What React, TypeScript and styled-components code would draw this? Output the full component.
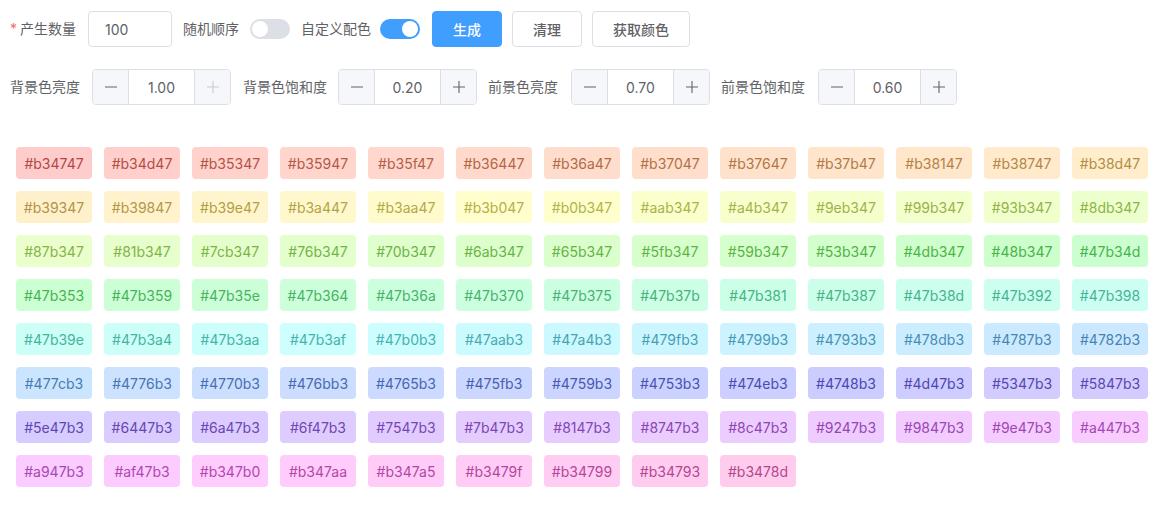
import React from "react";
import styled, { createGlobalStyle } from "styled-components";

const GlobalStyle = createGlobalStyle`
  html, body { margin: 0; padding: 0; background: #ffffff; }
  body { font-family: Inter, "Noto Sans CJK SC", sans-serif; font-size: 14px; color: #606266; }
  * { box-sizing: border-box; }
`;

const COLORS = [
  "b34747","b34d47","b35347","b35947","b35f47","b36447","b36a47","b37047","b37647","b37b47","b38147","b38747","b38d47",
  "b39347","b39847","b39e47","b3a447","b3aa47","b3b047","b0b347","aab347","a4b347","9eb347","99b347","93b347","8db347",
  "87b347","81b347","7cb347","76b347","70b347","6ab347","65b347","5fb347","59b347","53b347","4db347","48b347","47b34d",
  "47b353","47b359","47b35e","47b364","47b36a","47b370","47b375","47b37b","47b381","47b387","47b38d","47b392","47b398",
  "47b39e","47b3a4","47b3aa","47b3af","47b0b3","47aab3","47a4b3","479fb3","4799b3","4793b3","478db3","4787b3","4782b3",
  "477cb3","4776b3","4770b3","476bb3","4765b3","475fb3","4759b3","4753b3","474eb3","4748b3","4d47b3","5347b3","5847b3",
  "5e47b3","6447b3","6a47b3","6f47b3","7547b3","7b47b3","8147b3","8747b3","8c47b3","9247b3","9847b3","9e47b3","a447b3",
  "a947b3","af47b3","b347b0","b347aa","b347a5","b3479f","b34799","b34793","b3478d",
];

function hueOf(hex: string): number {
  const r = parseInt(hex.slice(0, 2), 16) / 255;
  const g = parseInt(hex.slice(2, 4), 16) / 255;
  const b = parseInt(hex.slice(4, 6), 16) / 255;
  const max = Math.max(r, g, b);
  const min = Math.min(r, g, b);
  const d = max - min;
  if (d === 0) return 0;
  let h = 0;
  if (max === r) h = ((g - b) / d) % 6;
  else if (max === g) h = (b - r) / d + 2;
  else h = (r - g) / d + 4;
  h *= 60;
  if (h < 0) h += 360;
  return h;
}

function hsv(h: number, s: number, v: number): string {
  const c = v * s;
  const x = c * (1 - Math.abs(((h / 60) % 2) - 1));
  const m = v - c;
  let r = 0, g = 0, b = 0;
  if (h < 60) [r, g, b] = [c, x, 0];
  else if (h < 120) [r, g, b] = [x, c, 0];
  else if (h < 180) [r, g, b] = [0, c, x];
  else if (h < 240) [r, g, b] = [0, x, c];
  else if (h < 300) [r, g, b] = [x, 0, c];
  else [r, g, b] = [c, 0, x];
  const to = (n: number) => Math.round((n + m) * 255).toString(16).padStart(2, "0");
  return `#${to(r)}${to(g)}${to(b)}`;
}

const Page = styled.div`
  padding: 11px 0 0 10px;
`;

const Row = styled.div<{ $mb: number }>`
  display: flex;
  align-items: center;
  height: 36px;
  margin-bottom: ${(p) => p.$mb}px;
`;

const Label = styled.span<{ $mr: number }>`
  font-size: 14px;
  line-height: 20px;
  color: #606266;
  white-space: nowrap;
  margin-right: ${(p) => p.$mr}px;
`;

const Star = styled.span`
  color: #f56c6c;
  margin-right: 3px;
`;

const TextInput = styled.div`
  width: 84px;
  height: 36px;
  border: 1px solid #dcdfe6;
  border-radius: 4px;
  display: flex;
  align-items: center;
  padding-left: 16px;
  color: #606266;
  font-size: 14px;
  margin-right: 11px;
`;

const Switch = styled.div<{ $on: boolean; $mr: number }>`
  position: relative;
  width: 40px;
  height: 20px;
  border-radius: 10px;
  background: ${(p) => (p.$on ? "#409eff" : "#dcdfe6")};
  margin-right: ${(p) => p.$mr}px;
  flex-shrink: 0;
`;

const Knob = styled.span<{ $on: boolean }>`
  position: absolute;
  top: 2px;
  left: ${(p) => (p.$on ? "22px" : "2px")};
  width: 16px;
  height: 16px;
  border-radius: 50%;
  background: #ffffff;
`;

const Button = styled.button<{ $primary?: boolean }>`
  height: 36px;
  padding: 0 20px;
  border-radius: 4px;
  border: 1px solid ${(p) => (p.$primary ? "#409eff" : "#dcdfe6")};
  background: ${(p) => (p.$primary ? "#409eff" : "#ffffff")};
  color: ${(p) => (p.$primary ? "#ffffff" : "#606266")};
  font-family: Inter, "Noto Sans CJK SC", sans-serif;
  font-size: 14px;
  font-weight: 500;
  margin-right: 10px;
  cursor: pointer;
`;

const NumberBox = styled.div<{ $mr: number }>`
  width: 139px;
  height: 36px;
  border: 1px solid #dcdfe6;
  border-radius: 4px;
  display: flex;
  overflow: hidden;
  margin-right: ${(p) => p.$mr}px;
  flex-shrink: 0;
`;

const Step = styled.div<{ $side: "left" | "right"; $disabled?: boolean }>`
  width: 36px;
  background: #f5f7fa;
  display: flex;
  align-items: center;
  justify-content: center;
  color: ${(p) => (p.$disabled ? "#c8cbd2" : "#606266")};
  ${(p) => (p.$side === "left" ? "border-right: 1px solid #dcdfe6;" : "border-left: 1px solid #dcdfe6;")}
`;

const NumValue = styled.div`
  flex: 1;
  display: flex;
  align-items: center;
  justify-content: center;
  font-size: 14px;
  color: #606266;
`;

const Grid = styled.div`
  display: grid;
  grid-template-columns: repeat(13, 76px);
  column-gap: 12px;
  row-gap: 12px;
  padding-left: 6px;
`;

const Chip = styled.div`
  height: 32px;
  border-radius: 4px;
  display: flex;
  align-items: center;
  justify-content: center;
  font-size: 14px;
`;

const Minus = () => (
  <svg width="14" height="14" viewBox="0 0 14 14">
    <line x1="1" y1="7" x2="13" y2="7" stroke="currentColor" strokeWidth="1.1" />
  </svg>
);
const Plus = () => (
  <svg width="14" height="14" viewBox="0 0 14 14">
    <line x1="1" y1="7" x2="13" y2="7" stroke="currentColor" strokeWidth="1.1" />
    <line x1="7" y1="1" x2="7" y2="13" stroke="currentColor" strokeWidth="1.1" />
  </svg>
);

const NumberInput = ({ value, mr, maxed }: { value: string; mr: number; maxed?: boolean }) => (
  <NumberBox $mr={mr}>
    <Step $side="left"><Minus /></Step>
    <NumValue>{value}</NumValue>
    <Step $side="right" $disabled={maxed}><Plus /></Step>
  </NumberBox>
);

export default function App() {
  return (
    <>
      <GlobalStyle />
      <Page>
        <Row $mb={22}>
          <Label $mr={12}><Star>*</Star>产生数量</Label>
          <TextInput>100</TextInput>
          <Label $mr={11}>随机顺序</Label>
          <Switch $on={false} $mr={11}><Knob $on={false} /></Switch>
          <Label $mr={9}>自定义配色</Label>
          <Switch $on={true} $mr={12}><Knob $on={true} /></Switch>
          <Button $primary>生成</Button>
          <Button>清理</Button>
          <Button>获取颜色</Button>
        </Row>
        <Row $mb={42}>
          <Label $mr={12}>背景色亮度</Label>
          <NumberInput value="1.00" mr={12} maxed />
          <Label $mr={11}>背景色饱和度</Label>
          <NumberInput value="0.20" mr={11} />
          <Label $mr={13}>前景色亮度</Label>
          <NumberInput value="0.70" mr={11} />
          <Label $mr={13}>前景色饱和度</Label>
          <NumberInput value="0.60" mr={0} />
        </Row>
        <Grid>
          {COLORS.map((c) => (
            <Chip key={c} style={{ background: hsv(hueOf(c), 0.2, 1.0), color: `#${c}` }}>
              #{c}
            </Chip>
          ))}
        </Grid>
      </Page>
    </>
  );
}
